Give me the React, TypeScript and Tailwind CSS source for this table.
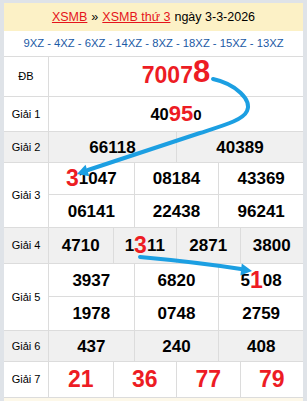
import React from 'react'

const RED = 'text-[#ed1c24]'

function Num({ children }: { children: React.ReactNode }) {
  return (
    <div className="flex items-center justify-center font-bold text-[17px] text-black leading-none">
      {children}
    </div>
  )
}

function Row({ label, gray, h, children }: { label: string; gray?: boolean; h: string; children: React.ReactNode }) {
  return (
    <div className={`flex border-b border-[#dcdcdc] ${h} ${gray ? 'bg-[#f0f0f0]' : 'bg-white'}`}>
      <div className="w-[45px] flex-none flex items-center justify-center border-r border-[#dcdcdc] text-[11px] text-black">
        {label}
      </div>
      <div className="flex-1 min-w-0">{children}</div>
    </div>
  )
}

function Arrows() {
  return (
    <svg className="absolute inset-0 pointer-events-none" width="307" height="401" viewBox="0 0 307 401">
      <path
        d="M213,79 C236,84 252,100 247,111 C243,120 225,125 200,133 L88,170"
        fill="none"
        stroke="#1c9fe2"
        strokeWidth="4"
        strokeLinecap="round"
      />
      <polygon points="77,174 89.3,176.2 85.5,164.8" fill="#1c9fe2" />
      <path d="M140,257 Q195,262 241,269" fill="none" stroke="#1c9fe2" strokeWidth="4" strokeLinecap="round" />
      <polygon points="252,271 240.4,275.5 241.8,263.6" fill="#1c9fe2" />
    </svg>
  )
}

export default function App() {
  return (
    <div className="relative w-[307px] h-[401px] overflow-hidden bg-[#dfe3e8] pl-[4px] pr-[4px] pt-[3px] font-['Liberation_Sans',Arial,sans-serif]">
      <div className="bg-white h-full">
        {/* Header */}
        <div className="h-[28px] bg-[#fcf1c6] flex items-center justify-center text-[12.5px] text-black">
          <span className="text-[#e5141b] underline">XSMB</span>
          <span className="mx-[4px]">»</span>
          <span className="text-[#e5141b] underline">XSMB thứ 3</span>
          <span className="ml-[4px]">ngày 3-3-2026</span>
        </div>

        {/* Lotto heads */}
        <div className="h-[26px] flex items-center justify-center border-b border-[#dcdcdc] text-[11.25px] text-[#1b5aa5]">
          9XZ - 4XZ - 6XZ - 14XZ - 8XZ - 18XZ - 15XZ - 13XZ
        </div>

        <Row label="ĐB" h="h-[40px]">
          <div className={`h-full flex items-end justify-center pb-[9px] font-bold leading-none ${RED}`}>
            <span className="text-[23px]">7007</span>
            <span className="text-[31px]">8</span>
          </div>
        </Row>

        <Row label="Giải 1" h="h-[35px]">
          <div className="h-full flex items-center justify-center font-bold leading-none">
            <span className="text-[16.5px] text-black">40</span>
            <span className={`text-[22px] ${RED}`}>95</span>
            <span className="text-[15px] text-black">0</span>
          </div>
        </Row>

        <Row label="Giải 2" gray h="h-[31px]">
          <div className="h-full grid grid-cols-2">
            <Num>66118</Num>
            <div className="border-l border-[#dcdcdc] flex items-center justify-center">
              <Num>40389</Num>
            </div>
          </div>
        </Row>

        <Row label="Giải 3" h="h-[65px]">
          <div className="h-full grid grid-cols-3 grid-rows-2">
            <div className="flex items-center justify-center border-b border-[#dcdcdc]">
              <Num>
                <span className={`text-[23px] ${RED}`}>3</span>1047
              </Num>
            </div>
            <div className="flex items-center justify-center border-b border-l border-[#dcdcdc]"><Num>08184</Num></div>
            <div className="flex items-center justify-center border-b border-l border-[#dcdcdc]"><Num>43369</Num></div>
            <div className="flex items-center justify-center"><Num>06141</Num></div>
            <div className="flex items-center justify-center border-l border-[#dcdcdc]"><Num>22438</Num></div>
            <div className="flex items-center justify-center border-l border-[#dcdcdc]"><Num>96241</Num></div>
          </div>
        </Row>

        <Row label="Giải 4" gray h="h-[36px]">
          <div className="h-full grid grid-cols-4">
            <div className="flex items-center justify-center"><Num>4710</Num></div>
            <div className="flex items-center justify-center border-l border-[#dcdcdc]">
              <Num>
                1<span className={`text-[23px] ${RED}`}>3</span>11
              </Num>
            </div>
            <div className="flex items-center justify-center border-l border-[#dcdcdc]"><Num>2871</Num></div>
            <div className="flex items-center justify-center border-l border-[#dcdcdc]"><Num>3800</Num></div>
          </div>
        </Row>

        <Row label="Giải 5" h="h-[67px]">
          <div className="h-full grid grid-cols-3 grid-rows-2">
            <div className="flex items-center justify-center border-b border-[#dcdcdc]"><Num>3937</Num></div>
            <div className="flex items-center justify-center border-b border-l border-[#dcdcdc]"><Num>6820</Num></div>
            <div className="flex items-center justify-center border-b border-l border-[#dcdcdc]">
              <Num>
                5<span className={`text-[23px] ${RED}`}>1</span>08
              </Num>
            </div>
            <div className="flex items-center justify-center"><Num>1978</Num></div>
            <div className="flex items-center justify-center border-l border-[#dcdcdc]"><Num>0748</Num></div>
            <div className="flex items-center justify-center border-l border-[#dcdcdc]"><Num>2759</Num></div>
          </div>
        </Row>

        <Row label="Giải 6" gray h="h-[31px]">
          <div className="h-full grid grid-cols-3">
            <div className="flex items-center justify-center"><Num>437</Num></div>
            <div className="flex items-center justify-center border-l border-[#dcdcdc]"><Num>240</Num></div>
            <div className="flex items-center justify-center border-l border-[#dcdcdc]"><Num>408</Num></div>
          </div>
        </Row>

        <Row label="Giải 7" h="h-[36px]">
          <div className={`h-full grid grid-cols-4 font-bold text-[23px] leading-none ${RED}`}>
            <div className="flex items-center justify-center">21</div>
            <div className="flex items-center justify-center border-l border-[#dcdcdc]">36</div>
            <div className="flex items-center justify-center border-l border-[#dcdcdc]">77</div>
            <div className="flex items-center justify-center border-l border-[#dcdcdc]">79</div>
          </div>
        </Row>

        <div className="h-[10px] bg-[#fdf8e9]" />
      </div>
      <Arrows />
    </div>
  )
}
